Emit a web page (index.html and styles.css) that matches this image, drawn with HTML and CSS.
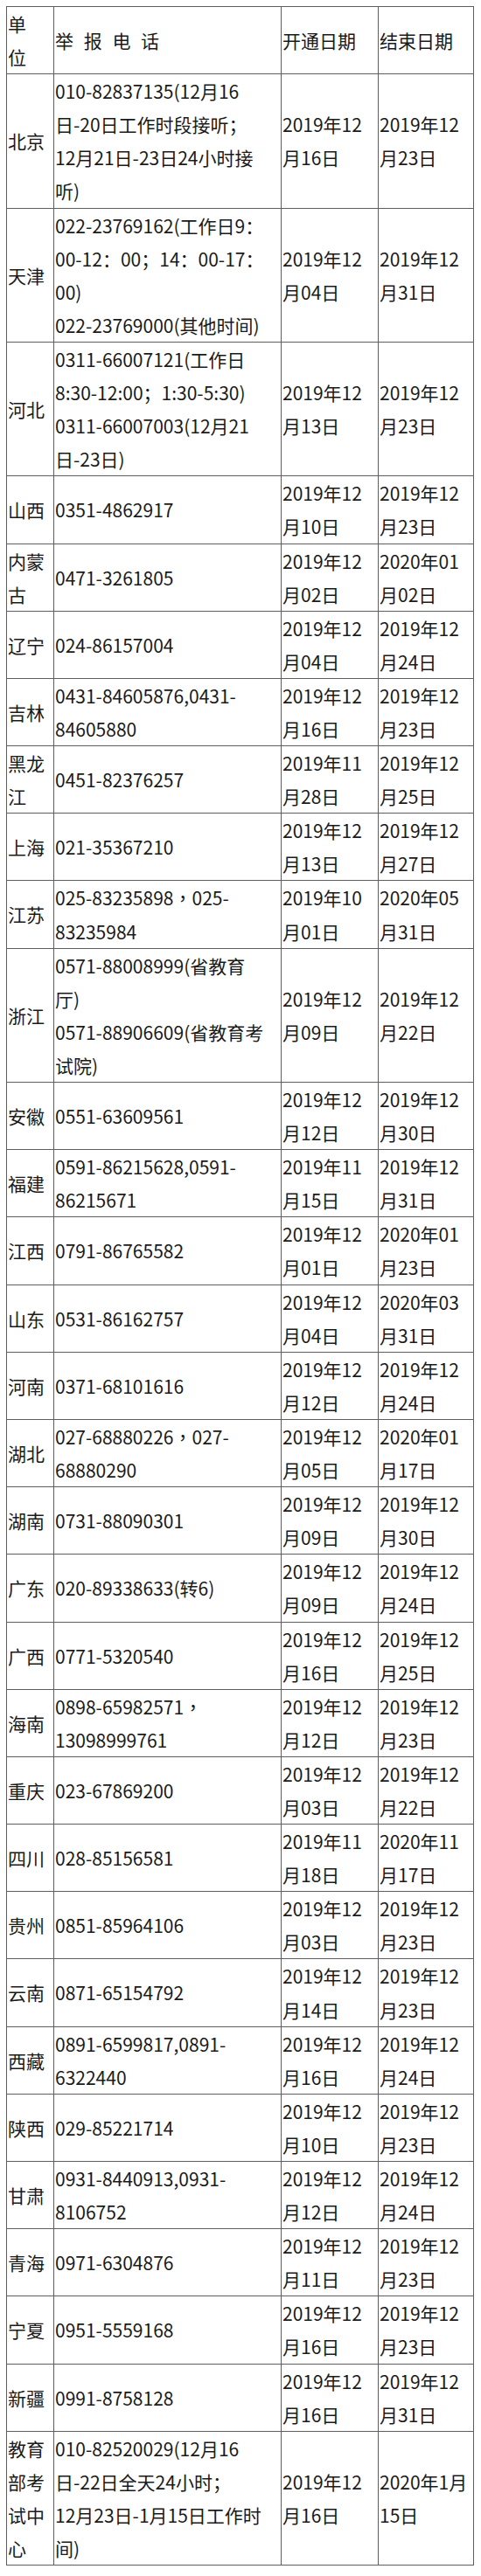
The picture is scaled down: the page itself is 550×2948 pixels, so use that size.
FILE: index.html
```html
<!DOCTYPE html>
<html lang="zh-CN">
<head>
<meta charset="utf-8">
<title>举报电话</title>
<link rel="stylesheet" href="styles.css">
</head>
<body>
<table class="tbl">
<colgroup>
<col class="c-unit"><col class="c-phone"><col class="c-date"><col class="c-date2">
</colgroup>
<tr><td>单<br>位</td><td><span class="spaced">举 报 电 话</span></td><td>开通日期</td><td>结束日期</td></tr>
<tr><td>北京</td><td>010-82837135(12月16<br>日-20日工作时段接听<span class="p">；</span><br>12月21日-23日24小时接<br>听)</td><td>2019年12<br>月16日</td><td>2019年12<br>月23日</td></tr>
<tr><td>天津</td><td>022-23769162(工作日9<span class="p">：</span><br>00-12<span class="p">：</span>00<span class="p">；</span>14<span class="p">：</span>00-17<span class="p">：</span><br>00)<br>022-23769000(其他时间)</td><td>2019年12<br>月04日</td><td>2019年12<br>月31日</td></tr>
<tr><td>河北</td><td>0311-66007121(工作日<br>8:30-12:00<span class="p">；</span>1:30-5:30)<br>0311-66007003(12月21<br>日-23日)</td><td>2019年12<br>月13日</td><td>2019年12<br>月23日</td></tr>
<tr><td>山西</td><td>0351-4862917</td><td>2019年12<br>月10日</td><td>2019年12<br>月23日</td></tr>
<tr><td>内蒙<br>古</td><td>0471-3261805</td><td>2019年12<br>月02日</td><td>2020年01<br>月02日</td></tr>
<tr><td>辽宁</td><td>024-86157004</td><td>2019年12<br>月04日</td><td>2019年12<br>月24日</td></tr>
<tr><td>吉林</td><td>0431-84605876,0431-<br>84605880</td><td>2019年12<br>月16日</td><td>2019年12<br>月23日</td></tr>
<tr><td>黑龙<br>江</td><td>0451-82376257</td><td>2019年11<br>月28日</td><td>2019年12<br>月25日</td></tr>
<tr><td>上海</td><td>021-35367210</td><td>2019年12<br>月13日</td><td>2019年12<br>月27日</td></tr>
<tr><td>江苏</td><td>025-83235898<span class="p">，</span>025-<br>83235984</td><td>2019年10<br>月01日</td><td>2020年05<br>月31日</td></tr>
<tr><td>浙江</td><td>0571-88008999(省教育<br>厅)<br>0571-88906609(省教育考<br>试院)</td><td>2019年12<br>月09日</td><td>2019年12<br>月22日</td></tr>
<tr><td>安徽</td><td>0551-63609561</td><td>2019年12<br>月12日</td><td>2019年12<br>月30日</td></tr>
<tr><td>福建</td><td>0591-86215628,0591-<br>86215671</td><td>2019年11<br>月15日</td><td>2019年12<br>月31日</td></tr>
<tr><td>江西</td><td>0791-86765582</td><td>2019年12<br>月01日</td><td>2020年01<br>月23日</td></tr>
<tr><td>山东</td><td>0531-86162757</td><td>2019年12<br>月04日</td><td>2020年03<br>月31日</td></tr>
<tr><td>河南</td><td>0371-68101616</td><td>2019年12<br>月12日</td><td>2019年12<br>月24日</td></tr>
<tr><td>湖北</td><td>027-68880226<span class="p">，</span>027-<br>68880290</td><td>2019年12<br>月05日</td><td>2020年01<br>月17日</td></tr>
<tr><td>湖南</td><td>0731-88090301</td><td>2019年12<br>月09日</td><td>2019年12<br>月30日</td></tr>
<tr><td>广东</td><td>020-89338633(转6)</td><td>2019年12<br>月09日</td><td>2019年12<br>月24日</td></tr>
<tr><td>广西</td><td>0771-5320540</td><td>2019年12<br>月16日</td><td>2019年12<br>月25日</td></tr>
<tr><td>海南</td><td>0898-65982571<span class="p">，</span><br>13098999761</td><td>2019年12<br>月12日</td><td>2019年12<br>月23日</td></tr>
<tr><td>重庆</td><td>023-67869200</td><td>2019年12<br>月03日</td><td>2019年12<br>月22日</td></tr>
<tr><td>四川</td><td>028-85156581</td><td>2019年11<br>月18日</td><td>2020年11<br>月17日</td></tr>
<tr><td>贵州</td><td>0851-85964106</td><td>2019年12<br>月03日</td><td>2019年12<br>月23日</td></tr>
<tr><td>云南</td><td>0871-65154792</td><td>2019年12<br>月14日</td><td>2019年12<br>月23日</td></tr>
<tr><td>西藏</td><td>0891-6599817,0891-<br>6322440</td><td>2019年12<br>月16日</td><td>2019年12<br>月24日</td></tr>
<tr><td>陕西</td><td>029-85221714</td><td>2019年12<br>月10日</td><td>2019年12<br>月23日</td></tr>
<tr><td>甘肃</td><td>0931-8440913,0931-<br>8106752</td><td>2019年12<br>月12日</td><td>2019年12<br>月24日</td></tr>
<tr><td>青海</td><td>0971-6304876</td><td>2019年12<br>月11日</td><td>2019年12<br>月23日</td></tr>
<tr><td>宁夏</td><td>0951-5559168</td><td>2019年12<br>月16日</td><td>2019年12<br>月23日</td></tr>
<tr><td>新疆</td><td>0991-8758128</td><td>2019年12<br>月16日</td><td>2019年12<br>月31日</td></tr>
<tr><td>教育<br>部考<br>试中<br>心</td><td>010-82520029(12月16<br>日-22日全天24小时<span class="p">；</span><br>12月23日-1月15日工作时<br>间)</td><td>2019年12<br>月16日</td><td>2020年1月<br>15日</td></tr>
</table>
</body>
</html>
```
FILE: styles.css
```css
html, body {
  margin: 0;
  padding: 0;
  background: #ffffff;
}
body {
  padding: 7px 0 0 7px;
  font-family: "Noto Sans CJK SC", "Noto Sans", sans-serif;
  font-size: 21px;
  color: #1a1a1a;
}
.tbl {
  border-collapse: collapse;
  table-layout: fixed;
  width: 534px;
}
.c-unit { width: 54px; }
.c-phone { width: 260px; }
.c-date { width: 111px; }
.c-date2 { width: 109px; }
.tbl td {
  border: 1px solid #5e5e5e;
  padding: 0 0 0 1px;
  line-height: 38.1px;
  vertical-align: middle;
  white-space: nowrap;
  overflow: hidden;
}
.spaced {
  word-spacing: 7px;
}
.p {
  font-family: "Noto Sans CJK TC", "Noto Sans CJK SC", sans-serif;
}
```
